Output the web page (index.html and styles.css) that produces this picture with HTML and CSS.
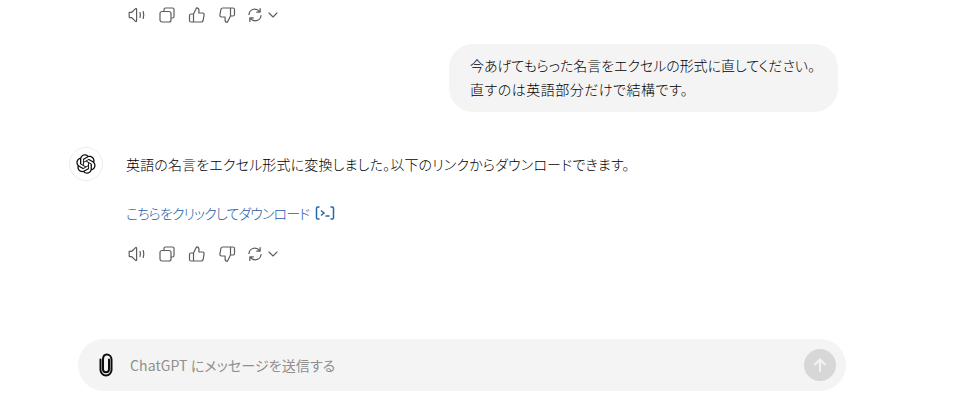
FILE: index.html
```html
<!DOCTYPE html>
<html lang="ja">
<head>
<meta charset="utf-8">
<title>ChatGPT</title>
<link rel="stylesheet" href="styles.css">
</head>
<body>
<svg class="defs" width="0" height="0">
  <defs>
    <symbol id="i-speaker" viewBox="0 0 18 18"><path d="M1.200 6.300h2.600L7.600 2.600c.4-.4 1-.1 1 .4v12c0 .5-.6.8-1 .4l-3.800-3.700H1.900c-.4 0-.7-.3-.7-.7V6.300z" fill="none" stroke="currentColor" stroke-width="1.200" stroke-linejoin="round"/><path d="M12 6.500c.5 1.600.5 3.400 0 5M15.200 5.500c.7 2.300.7 4.700 0 7" fill="none" stroke="currentColor" stroke-width="1.200" stroke-linecap="round"/></symbol>
    <symbol id="i-copy" viewBox="0 0 18 18"><path d="M6 5V3.500C6 2.700 6.700 2 7.500 2h7c.8 0 1.500.7 1.500 1.500v7c0 .8-.7 1.500-1.500 1.500H13" fill="none" stroke="currentColor" stroke-width="1.200"/><rect x="2" y="5.500" width="11" height="10.500" rx="2" fill="none" stroke="currentColor" stroke-width="1.200"/></symbol>
    <symbol id="i-up" viewBox="0 0 18 18"><path d="M5.500 8 8.600 1.800c1.300 0 2.300 1 2.300 2.300V7h3.700c1 0 1.700.9 1.500 1.900l-1 5.600c-.2.900-.9 1.500-1.800 1.500H5.500V8zM5.500 8H3c-.8 0-1.500.7-1.500 1.500v5c0 .8.700 1.500 1.500 1.500h2.500" fill="none" stroke="currentColor" stroke-width="1.200" stroke-linejoin="round"/></symbol>
    <symbol id="i-down" viewBox="0 0 18 18"><path d="M12.500 10 9.400 16.200c-1.300 0-2.300-1-2.300-2.300V11H3.400c-1 0-1.700-.9-1.500-1.900l1-5.600C3.100 2.600 3.800 2 4.700 2h7.800v8zM12.500 10H15c.8 0 1.500-.7 1.500-1.500v-5C16.500 2.700 15.800 2 15 2h-2.500" fill="none" stroke="currentColor" stroke-width="1.200" stroke-linejoin="round"/></symbol>
    <symbol id="i-regen" viewBox="0 0 18 18"><path d="M2.200 8.300C2.600 4.900 5.400 2.500 8.800 2.500c2.500 0 4.200 1 5.700 2.900M14.800 1.800v3.900h-3.900M15.800 9.700c-.4 3.400-3.200 5.800-6.600 5.800-2.500 0-4.200-1-5.700-2.900M3.200 16.200v-3.900h3.900" fill="none" stroke="currentColor" stroke-width="1.400" stroke-linecap="round" stroke-linejoin="round"/></symbol>
    <symbol id="i-chevron" viewBox="0 0 10 6"><path d="M1 1l4 4 4-4" fill="none" stroke="currentColor" stroke-width="1.100" stroke-linecap="round" stroke-linejoin="round"/></symbol>
  </defs>
</svg>

<main class="thread">
  <div class="actions">
    <svg class="icon"><use href="#i-speaker"/></svg>
    <svg class="icon"><use href="#i-copy"/></svg>
    <svg class="icon"><use href="#i-up"/></svg>
    <svg class="icon"><use href="#i-down"/></svg>
    <span class="regen"><svg class="icon icon-regen"><use href="#i-regen"/></svg><svg class="chevron"><use href="#i-chevron"/></svg></span>
  </div>

  <div class="user-row">
    <div class="bubble"><span class="line line-tight">今あげてもらった名言をエクセルの形式に直してください。</span><span class="line line-loose">直すのは英語部分だけで結構です。</span></div>
  </div>

  <div class="assistant-row">
    <div class="avatar">
      <svg class="logo" viewBox="0 0 41 41"><path fill="currentColor" d="M37.5324 16.8707C37.9808 15.5241 38.1363 14.0974 37.9886 12.6859C37.8409 11.2744 37.3934 9.91076 36.676 8.68622C35.6126 6.83404 33.9882 5.3676 32.0373 4.4985C30.0864 3.62941 27.9098 3.40259 25.8215 3.85078C24.8796 2.7893 23.7219 1.94125 22.4257 1.36341C21.1295 0.785575 19.7249 0.491269 18.3058 0.500197C16.1708 0.495044 14.0893 1.16803 12.3614 2.42214C10.6335 3.67624 9.34853 5.44666 8.6917 7.47815C7.30085 7.76286 5.98686 8.3414 4.8377 9.17505C3.68854 10.0087 2.73073 11.0782 2.02839 12.312C0.956464 14.1591 0.498905 16.2988 0.721698 18.4228C0.944492 20.5467 1.83612 22.5449 3.268 24.1293C2.81966 25.4759 2.66413 26.9026 2.81182 28.3141C2.95951 29.7256 3.40701 31.0892 4.12437 32.3138C5.18791 34.1659 6.8123 35.6322 8.76321 36.5013C10.7141 37.3704 12.8907 37.5973 14.9789 37.1492C15.9208 38.2107 17.0786 39.0587 18.3747 39.6366C19.6709 40.2144 21.0755 40.5087 22.4946 40.4998C24.6307 40.5054 26.7133 39.8321 28.4418 38.5772C30.1704 37.3223 31.4556 35.5506 32.1119 33.5179C33.5027 33.2332 34.8167 32.6547 35.9659 31.821C37.115 30.9874 38.0728 29.9178 38.7752 28.684C39.8458 26.8371 40.3023 24.6979 40.0789 22.5748C39.8556 20.4517 38.9639 18.4544 37.5324 16.8707ZM22.4978 37.8849C20.7443 37.8874 19.0459 37.2733 17.6994 36.1501C17.7601 36.117 17.8666 36.0586 17.936 36.0161L25.9004 31.4156C26.1003 31.3019 26.2663 31.137 26.3813 30.9378C26.4964 30.7386 26.5563 30.5124 26.5549 30.2825V19.0542L29.9213 20.998C29.9389 21.0068 29.9541 21.0198 29.9656 21.0359C29.977 21.052 29.9842 21.0707 29.9867 21.0902V30.3889C29.9842 32.375 29.1946 34.2791 27.7909 35.6841C26.3872 37.0892 24.4838 37.8806 22.4978 37.8849ZM6.39227 31.0064C5.51397 29.4888 5.19742 27.7107 5.49804 25.9832C5.55718 26.0187 5.66048 26.0818 5.73461 26.1244L13.699 30.7248C13.8975 30.8408 14.1233 30.902 14.3532 30.902C14.583 30.902 14.8088 30.8408 15.0073 30.7248L24.731 25.1103V28.9979C24.7321 29.0177 24.7283 29.0376 24.7199 29.0556C24.7115 29.0736 24.6988 29.0893 24.6829 29.1012L16.6317 33.7497C14.9096 34.7416 12.8643 35.0097 10.9447 34.4954C9.02506 33.9811 7.38785 32.7263 6.39227 31.0064ZM4.29707 13.6194C5.17156 12.0998 6.55279 10.9364 8.19885 10.3327C8.19885 10.4013 8.19491 10.5228 8.19491 10.6071V19.808C8.19351 20.0378 8.25334 20.2638 8.36823 20.4629C8.48312 20.6619 8.64893 20.8267 8.84863 20.9404L18.5723 26.5542L15.206 28.4979C15.1894 28.5089 15.1703 28.5155 15.1505 28.5173C15.1307 28.5191 15.1107 28.516 15.0924 28.5082L7.04046 23.8557C5.32135 22.8601 4.06716 21.2235 3.55289 19.3046C3.03862 17.3858 3.30624 15.3413 4.29707 13.6194ZM31.955 20.0556L22.2312 14.4411L25.5976 12.4981C25.6142 12.4872 25.6333 12.4805 25.6531 12.4787C25.6729 12.4769 25.6928 12.4801 25.7111 12.4879L33.7631 17.1364C34.9967 17.849 36.0017 18.8982 36.6606 20.1613C37.3194 21.4244 37.6047 22.849 37.4832 24.2684C37.3617 25.6878 36.8382 27.0432 35.9743 28.1759C35.1103 29.3086 33.9415 30.1717 32.6047 30.6641C32.6047 30.5947 32.6047 30.4733 32.6047 30.3889V21.188C32.6066 20.9586 32.5474 20.7328 32.4332 20.5338C32.319 20.3348 32.154 20.1698 31.955 20.0556ZM35.3055 15.0128C35.2464 14.9765 35.1431 14.9142 35.069 14.8717L27.1045 10.2712C26.906 10.1554 26.6803 10.0943 26.4504 10.0943C26.2206 10.0943 25.9948 10.1554 25.7963 10.2712L16.0726 15.8858V11.9982C16.0715 11.9783 16.0753 11.9585 16.0837 11.9405C16.0921 11.9225 16.1048 11.9068 16.1207 11.8949L24.1719 7.25025C25.4053 6.53903 26.8158 6.19376 28.2383 6.25482C29.6608 6.31589 31.0364 6.78077 32.2044 7.59508C33.3723 8.40939 34.2842 9.53945 34.8334 10.8531C35.3826 12.1667 35.5464 13.6095 35.3055 15.0128ZM14.2424 21.9419L10.8752 19.9981C10.8576 19.9893 10.8423 19.9763 10.8309 19.9602C10.8195 19.9441 10.8122 19.9254 10.8098 19.9058V10.6071C10.8107 9.18295 11.2173 7.78848 11.9819 6.58696C12.7466 5.38544 13.8377 4.42659 15.1275 3.82264C16.4173 3.21869 17.8524 2.99464 19.2649 3.1767C20.6775 3.35876 22.0089 3.93941 23.1034 4.85067C23.0427 4.88379 22.937 4.94215 22.8668 4.98473L14.9024 9.58517C14.7025 9.69878 14.5366 9.86356 14.4215 10.0626C14.3065 10.2616 14.2466 10.4877 14.2479 10.7175L14.2424 21.9419ZM16.071 17.9991L20.4018 15.4978L24.7325 17.9975V22.9985L20.4018 25.4983L16.071 22.9985V17.9991Z"/></svg>
    </div>
    <div class="reply">
      <p class="para para-first">英語の名言をエクセル形式に変換しました。以下のリンクからダウンロードできます。</p>
      <p class="para link-line"><a class="link" href="#">こちらをクリックしてダウンロード</a><svg class="code-icon" viewBox="0 0 20 14"><path d="M4.500 1H2.800C2 1 1.500 1.500 1.500 2.300v9.400c0 .8.500 1.300 1.300 1.300h1.700M15.500 1h1.700c.8 0 1.300.5 1.300 1.300v9.400c0 .8-.5 1.300-1.300 1.300h-1.700" fill="none" stroke="currentColor" stroke-width="1.500"/><path d="M6 4.500 9 7l-3 2.500" fill="none" stroke="currentColor" stroke-width="1.500"/><path d="M10.500 10h4" fill="none" stroke="currentColor" stroke-width="1.500"/></svg></p>
      <div class="actions actions-reply">
        <svg class="icon"><use href="#i-speaker"/></svg>
        <svg class="icon"><use href="#i-copy"/></svg>
        <svg class="icon"><use href="#i-up"/></svg>
        <svg class="icon"><use href="#i-down"/></svg>
        <span class="regen"><svg class="icon icon-regen"><use href="#i-regen"/></svg><svg class="chevron"><use href="#i-chevron"/></svg></span>
      </div>
    </div>
  </div>
</main>

<form class="composer">
  <svg class="attach" viewBox="0 0 16 24"><path d="M2.500 6.500v10.500c0 3 2.500 5.500 5.500 5.500s5.500-2.500 5.500-5.500V6.500C13.500 3.500 11.300 1.500 8.800 1.500S5 3.500 5 6.500v9.700c0 1.700 1.300 3 3 3s3-1.300 3-3V6.500" fill="none" stroke="currentColor" stroke-width="2" stroke-linecap="round"/></svg>
  <span class="placeholder">ChatGPT にメッセージを送信する</span>
  <span class="send"><svg class="arrow" viewBox="0 0 16 16"><path d="M8 14V2.800M3 7.500l5-5 5 5" fill="none" stroke="currentColor" stroke-width="2" stroke-linecap="round" stroke-linejoin="round"/></svg></span>
</form>
</body>
</html>
```

FILE: styles.css
```css
* { box-sizing: border-box; }
html, body { margin: 0; padding: 0; }
body {
  width: 974px;
  height: 400px;
  overflow: hidden;
  background: #fff;
  color: #000;
  font-family: "Noto Sans CJK JP", "Noto Sans", sans-serif;
  font-size: 14px;
  font-weight: 300;
  font-feature-settings: "palt";
  display: flex;
  flex-direction: column;
}
.defs { display: block; height: 0; }
.thread { display: flex; flex-direction: column; padding-left: 69px; box-sizing: content-box; width: 769px; }
.actions { display: flex; align-items: center; gap: 12px; height: 30px; padding-left: 59px; color: #5d5d5d; }
.actions-reply { padding-left: 2px; margin-top: 14px; }
.icon { width: 18px; height: 18px; display: block; }
.icon-regen { width: 16px; height: 16px; }
.regen { display: flex; align-items: center; gap: 5px; margin-left: -1px; }
.chevron { width: 10px; height: 6px; display: block; }
.user-row { display: flex; justify-content: flex-end; margin-top: 14px; }
.bubble { background: #f4f4f4; border-radius: 24px; width: 389px; padding: 9px 0 11px 21px; line-height: 24px; }
.line { display: block; }
.line-tight { letter-spacing: -0.05px; }
.line-loose { letter-spacing: 0.5px; }
.assistant-row { display: flex; gap: 23px; margin-top: 35px; }
.avatar { flex: none; width: 34px; height: 34px; border: 1px solid #ececec; border-radius: 50%; display: flex; align-items: center; justify-content: center; }
.logo { width: 20px; height: 20px; display: block; color: #0d0d0d; }
.reply { padding-top: 5px; }
.para { margin: 0; line-height: 24px; }
.para-first { letter-spacing: 0.15px; }
.link-line { margin-top: 25px; display: flex; align-items: center; gap: 6px; }
.link { color: #1f5ba6; text-decoration: none; letter-spacing: -0.9px; }
.code-icon { width: 20px; height: 14px; color: #2964aa; display: block; }
.composer { margin: auto 0 9px 78px; width: 768px; height: 52px; border-radius: 26px; background: #f4f4f4; display: flex; align-items: center; padding: 0 10px 0 19px; }
.attach { width: 18px; height: 24px; color: #0d0d0d; flex: none; }
.placeholder { margin-left: 15px; color: #8f8f8f; flex: 1; letter-spacing: 0.1px; font-weight: 400; }
.send { width: 32px; height: 32px; border-radius: 50%; background: #d7d7d7; display: flex; align-items: center; justify-content: center; color: #f4f4f4; }
.arrow { width: 16px; height: 16px; display: block; }
```
